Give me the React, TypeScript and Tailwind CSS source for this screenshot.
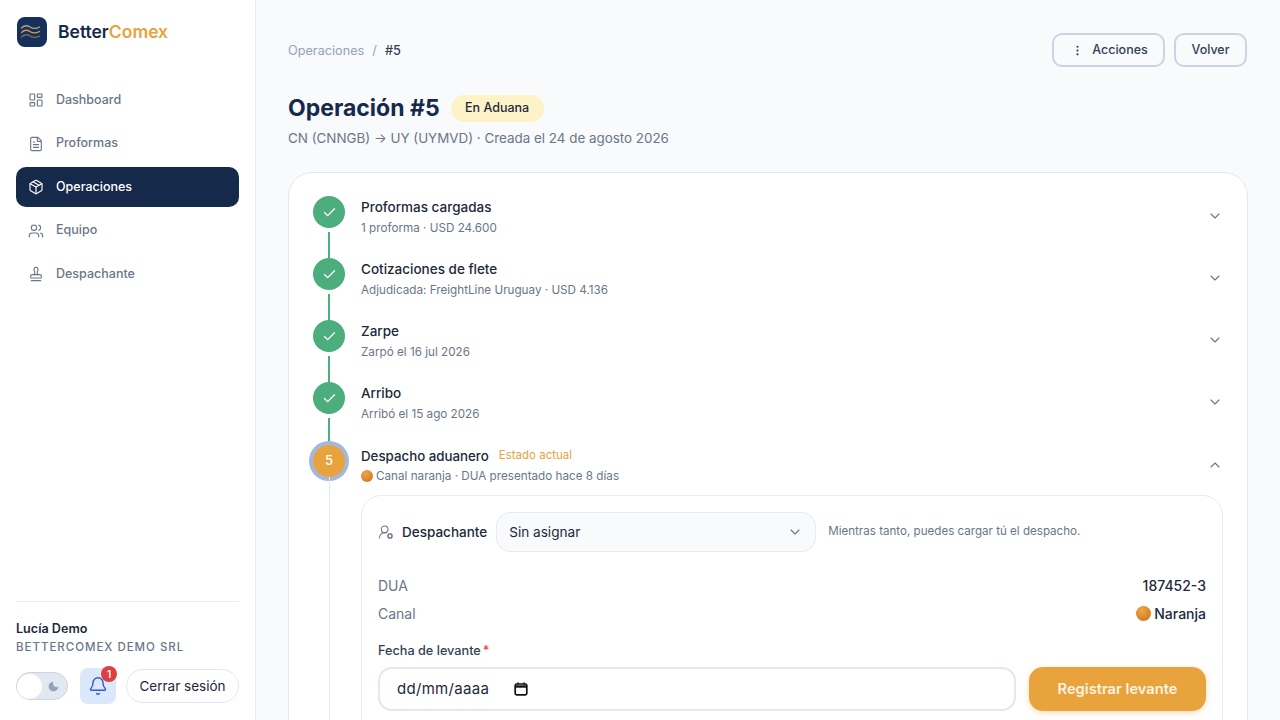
import {
  Bell,
  Check,
  ChevronDown,
  ChevronUp,
  EllipsisVertical,
  FileText,
  LayoutDashboard,
  Moon,
  Package,
  Stamp,
  UserRoundCog,
  Users,
} from "lucide-react";

const navItems = [
  { label: "Dashboard", icon: LayoutDashboard },
  { label: "Proformas", icon: FileText },
  { label: "Operaciones", icon: Package, active: true },
  { label: "Equipo", icon: Users },
  { label: "Despachante", icon: Stamp },
];

const doneSteps = [
  { title: "Proformas cargadas", detail: "1 proforma · USD 24.600" },
  { title: "Cotizaciones de flete", detail: "Adjudicada: FreightLine Uruguay · USD 4.136" },
  { title: "Zarpe", detail: "Zarpó el 16 jul 2026" },
  { title: "Arribo", detail: "Arribó el 15 ago 2026" },
];

function OrangeDot({ className }: { className: string }) {
  return (
    <span
      className={`inline-block shrink-0 rounded-full bg-[radial-gradient(circle_at_40%_30%,#f0a545,#c96f1c)] ${className}`}
    />
  );
}

function Sidebar() {
  return (
    <aside className="flex h-screen w-[256px] shrink-0 flex-col border-r border-[#e8ecf2] bg-white px-4 pt-[17px] pb-4">
      <div className="flex items-center gap-[11px] pl-px">
        <div className="flex h-[30px] w-[30px] items-center justify-center rounded-lg bg-[#15305b]">
          <svg width="24" height="18" viewBox="0 0 24 18" fill="none" strokeWidth="1.3" strokeLinecap="round">
            <path d="M1.500 5c3-3 5.500-3 8.500-1s6 2 9.500 0" stroke="#bfa27a" />
            <path d="M1.500 9.500c3-3 5.500-3 8.500-1s6 2 9.500 0" stroke="#d99c45" />
            <path d="M1.500 14c3-3 5.500-3 8.500-1s6 2 9.500 0" stroke="#7d6f5c" />
          </svg>
        </div>
        <span className="text-[17.500px] font-semibold text-[#15294b]">
          Better<span className="text-[#e8a33d]">Comex</span>
        </span>
      </div>

      <nav className="mt-[33px] flex flex-col gap-[3.5px]">
        {navItems.map((item) => (
          <a
            key={item.label}
            className={`flex h-10 items-center gap-3 rounded-[10px] px-3 text-[12.500px] font-medium ${
              item.active ? "bg-[#15294b] text-white" : "text-[#6b7688]"
            }`}
          >
            <item.icon size={16} strokeWidth={1.7} />
            {item.label}
          </a>
        ))}
      </nav>

      <div className="mt-auto border-t border-[#e8ecf2] pt-[18px]">
        <div className="text-[12.600px] leading-[18px] font-semibold text-[#1e293b]">Lucía Demo</div>
        <div className="text-[11.500px] leading-[18px] font-medium tracking-[0.085em] text-[#6b7688]">
          BETTERCOMEX DEMO SRL
        </div>
        <div className="mt-[12px] flex items-center">
          <div className="flex h-7 w-[52px] items-center justify-between rounded-full border border-[#cbd5e1] bg-[#e2e8f0] pr-[7px]">
            <span className="h-[25px] w-[25px] rounded-full bg-white" />
            <Moon size={13} strokeWidth={0} fill="#94a3b8" />
          </div>
          <div className="relative ml-3 flex h-9 w-9 items-center justify-center rounded-lg bg-[#dbe7fb] text-[#2f5fc4]">
            <Bell size={20} strokeWidth={1.7} />
            <span className="absolute -top-[2px] -right-[1px] flex h-4 w-4 items-center justify-center rounded-full bg-[#dc4040] text-[10px] font-semibold text-white">
              1
            </span>
          </div>
          <button className="ml-[10px] h-[34px] flex-1 rounded-full border border-[#e2e8f0] bg-white text-[13.500px] text-[#1e293b]">
            Cerrar sesión
          </button>
        </div>
      </div>
    </aside>
  );
}

function Header() {
  return (
    <>
      <div className="flex items-center justify-between">
        <div className="flex items-center pt-[1px] text-[12.700px] text-[#94a3b8]">
          <span>Operaciones</span>
          <span className="mx-2">/</span>
          <span className="font-medium text-[#334155]">#5</span>
        </div>
        <div className="flex gap-[9px] pr-px">
          <button className="flex h-[34px] w-[113px] items-center justify-center gap-2 rounded-[10px] border-2 border-[#cbd5e1] pl-[2px] text-[12.500px] font-medium text-[#334155]">
            <EllipsisVertical size={13} strokeWidth={2} />
            Acciones
          </button>
          <button className="h-[34px] w-[73px] rounded-[10px] border-2 border-[#cbd5e1] text-[12.500px] font-medium text-[#334155]">
            Volver
          </button>
        </div>
      </div>
      <div className="mt-[25px] flex items-center gap-[11px]">
        <h1 className="text-[23px] leading-8 font-bold text-[#15294b]">Operación #5</h1>
        <span className="flex h-[27px] w-[93px] items-center justify-center rounded-full bg-[#fdf3c7] text-[12.500px] font-medium text-[#1e293b]">
          En Aduana
        </span>
      </div>
      <p className="mt-[4px] text-[13.400px] leading-5 text-[#6b7688]">
        CN (CNNGB) → UY (UYMVD) · Creada el 24 de agosto 2026
      </p>
    </>
  );
}

function DoneStep({ title, detail }: { title: string; detail: string }) {
  return (
    <div className="flex h-[62px]">
      <div className="flex w-8 flex-col items-center">
        <span className="flex h-8 w-8 shrink-0 items-center justify-center rounded-full bg-[#4cad7d] text-white">
          <Check size={15} strokeWidth={2.2} />
        </span>
        <span className="mt-1 w-0.5 flex-1 bg-[#4cad7d]" />
      </div>
      <div className="ml-4 flex-1 pt-px">
        <div className="text-[13.500px] leading-5 font-medium text-[#1e293b]">{title}</div>
        <div className="mt-px text-[11.700px] leading-[20px] text-[#6b7688]">{detail}</div>
      </div>
      <ChevronDown size={16} strokeWidth={1.7} className="mt-3 text-[#6b7688]" />
    </div>
  );
}

function CustomsPanel() {
  return (
    <div className="mt-[9px] rounded-[20px] border border-[#e8ecf2] px-4 pt-4 pb-6">
      <div className="flex items-center">
        <UserRoundCog size={16} strokeWidth={1.6} className="text-[#6b7688]" />
        <span className="ml-2 text-[13.500px] font-medium text-[#1e293b]">Despachante</span>
        <div className="ml-[9px] flex h-10 w-[320px] items-center justify-between rounded-[14px] border border-[#e8ecf2] bg-[#f8fafc] px-3 text-[13.600px] text-[#1e293b]">
          Sin asignar
          <ChevronDown size={16} strokeWidth={1.7} className="text-[#6b7688]" />
        </div>
        <span className="ml-3 text-[11.600px] text-[#6b7688]">Mientras tanto, puedes cargar tú el despacho.</span>
      </div>

      <div className="mt-[19px] flex h-7 items-center justify-between text-[14px]">
        <span className="text-[#6b7688]">DUA</span>
        <span className="font-medium text-[#1e293b]">187452-3</span>
      </div>
      <div className="flex h-7 items-center justify-between text-[14px]">
        <span className="text-[#6b7688]">Canal</span>
        <span className="flex items-center gap-[3px] font-medium text-[#1e293b]">
          <OrangeDot className="h-[15px] w-[15px]" />
          Naranja
        </span>
      </div>

      <label className="mt-[14px] block text-[12.700px] leading-5 font-medium text-[#334155]">
        Fecha de levante<span className="ml-[2px] text-[#dc4040]">*</span>
      </label>
      <div className="mt-[6px] flex gap-[13px]">
        <div className="flex h-11 flex-1 items-center gap-[24px] rounded-[14px] border-2 border-[#e2e8f0] px-[17px] text-[15px] tracking-[0.02em] text-[#1e293b]">
          dd/mm/aaaa
          <svg width="16" height="16" viewBox="0 0 16 16" fill="none">
            <rect x="2.200" y="3" width="11.600" height="10.800" rx="1.500" stroke="#111" strokeWidth="1.700" />
            <path d="M2 5.500h12" stroke="#111" strokeWidth="2.400" />
            <path d="M5 1.500v2M11 1.500v2" stroke="#111" strokeWidth="1.500" />
          </svg>
        </div>
        <button className="h-11 w-[177px] rounded-[14px] bg-[#e8a33d] text-[14.700px] font-semibold text-[#fdf3e0] shadow-[0_2px_6px_rgba(232,163,61,0.35)]">
          Registrar levante
        </button>
      </div>
    </div>
  );
}

export default function App() {
  return (
    <div className="flex h-screen overflow-hidden bg-[#f8fafc] font-['Inter',sans-serif]">
      <Sidebar />
      <main className="flex-1 overflow-hidden px-8 pt-[33px]">
        <Header />
        <section className="mt-6 rounded-[24px] border border-[#e2e8f0] bg-white px-6 pt-[23px] pb-6">
          {doneSteps.map((step) => (
            <DoneStep key={step.title} {...step} />
          ))}
          <div className="flex pt-px">
            <div className="flex w-8 shrink-0 flex-col items-center">
              <span className="flex h-8 w-8 shrink-0 items-center justify-center rounded-full bg-[#e8a33d] text-[13px] font-medium text-white ring-4 ring-[#a3b8dc]">
                5
              </span>
              <span className="w-px flex-1 bg-[#e2e8f0]" />
            </div>
            <div className="ml-4 min-w-0 flex-1">
              <div className="flex justify-between">
                <div className="pt-px">
                  <div className="flex items-center gap-[10px]">
                    <span className="text-[13.300px] leading-5 font-medium text-[#1e293b]">Despacho aduanero</span>
                    <span className="text-[11.500px] text-[#e8a33d]">Estado actual</span>
                  </div>
                  <div className="flex items-center gap-[3px] text-[11.700px] leading-[20px] text-[#6b7688]">
                    <OrangeDot className="h-3 w-3" />
                    Canal naranja · DUA presentado hace 8 días
                  </div>
                </div>
                <ChevronUp size={16} strokeWidth={1.7} className="mt-3 text-[#6b7688]" />
              </div>
              <CustomsPanel />
            </div>
          </div>
        </section>
      </main>
    </div>
  );
}
